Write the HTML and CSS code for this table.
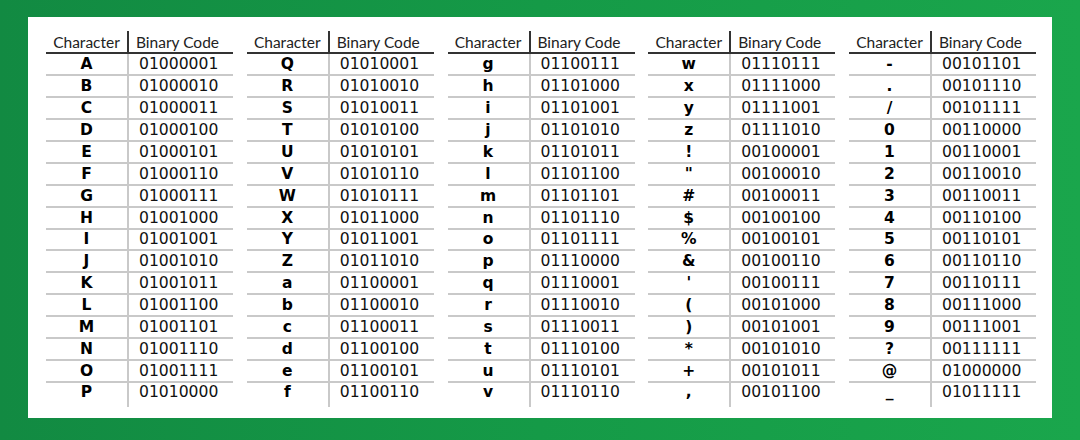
FILE: index.html
```html
<!DOCTYPE html>
<html>
<head>
<meta charset="utf-8">
<link rel="stylesheet" href="styles.css">
</head>
<body>
<div class="panel">
<table class="codes">
<thead><tr><th>Character</th><th>Binary Code</th></tr></thead>
<tbody>
<tr><td>A</td><td>01000001</td></tr>
<tr><td>B</td><td>01000010</td></tr>
<tr><td>C</td><td>01000011</td></tr>
<tr><td>D</td><td>01000100</td></tr>
<tr><td>E</td><td>01000101</td></tr>
<tr><td>F</td><td>01000110</td></tr>
<tr><td>G</td><td>01000111</td></tr>
<tr><td>H</td><td>01001000</td></tr>
<tr><td>I</td><td>01001001</td></tr>
<tr><td>J</td><td>01001010</td></tr>
<tr><td>K</td><td>01001011</td></tr>
<tr><td>L</td><td>01001100</td></tr>
<tr><td>M</td><td>01001101</td></tr>
<tr><td>N</td><td>01001110</td></tr>
<tr><td>O</td><td>01001111</td></tr>
<tr><td>P</td><td>01010000</td></tr>
</tbody>
</table>
<table class="codes">
<thead><tr><th>Character</th><th>Binary Code</th></tr></thead>
<tbody>
<tr><td>Q</td><td>01010001</td></tr>
<tr><td>R</td><td>01010010</td></tr>
<tr><td>S</td><td>01010011</td></tr>
<tr><td>T</td><td>01010100</td></tr>
<tr><td>U</td><td>01010101</td></tr>
<tr><td>V</td><td>01010110</td></tr>
<tr><td>W</td><td>01010111</td></tr>
<tr><td>X</td><td>01011000</td></tr>
<tr><td>Y</td><td>01011001</td></tr>
<tr><td>Z</td><td>01011010</td></tr>
<tr><td>a</td><td>01100001</td></tr>
<tr><td>b</td><td>01100010</td></tr>
<tr><td>c</td><td>01100011</td></tr>
<tr><td>d</td><td>01100100</td></tr>
<tr><td>e</td><td>01100101</td></tr>
<tr><td>f</td><td>01100110</td></tr>
</tbody>
</table>
<table class="codes">
<thead><tr><th>Character</th><th>Binary Code</th></tr></thead>
<tbody>
<tr><td>g</td><td>01100111</td></tr>
<tr><td>h</td><td>01101000</td></tr>
<tr><td>i</td><td>01101001</td></tr>
<tr><td>j</td><td>01101010</td></tr>
<tr><td>k</td><td>01101011</td></tr>
<tr><td>l</td><td>01101100</td></tr>
<tr><td>m</td><td>01101101</td></tr>
<tr><td>n</td><td>01101110</td></tr>
<tr><td>o</td><td>01101111</td></tr>
<tr><td>p</td><td>01110000</td></tr>
<tr><td>q</td><td>01110001</td></tr>
<tr><td>r</td><td>01110010</td></tr>
<tr><td>s</td><td>01110011</td></tr>
<tr><td>t</td><td>01110100</td></tr>
<tr><td>u</td><td>01110101</td></tr>
<tr><td>v</td><td>01110110</td></tr>
</tbody>
</table>
<table class="codes">
<thead><tr><th>Character</th><th>Binary Code</th></tr></thead>
<tbody>
<tr><td>w</td><td>01110111</td></tr>
<tr><td>x</td><td>01111000</td></tr>
<tr><td>y</td><td>01111001</td></tr>
<tr><td>z</td><td>01111010</td></tr>
<tr><td>!</td><td>00100001</td></tr>
<tr><td>"</td><td>00100010</td></tr>
<tr><td>#</td><td>00100011</td></tr>
<tr><td>$</td><td>00100100</td></tr>
<tr><td>%</td><td>00100101</td></tr>
<tr><td>&amp;</td><td>00100110</td></tr>
<tr><td>'</td><td>00100111</td></tr>
<tr><td>(</td><td>00101000</td></tr>
<tr><td>)</td><td>00101001</td></tr>
<tr><td>*</td><td>00101010</td></tr>
<tr><td>+</td><td>00101011</td></tr>
<tr><td>,</td><td>00101100</td></tr>
</tbody>
</table>
<table class="codes">
<thead><tr><th>Character</th><th>Binary Code</th></tr></thead>
<tbody>
<tr><td>-</td><td>00101101</td></tr>
<tr><td>.</td><td>00101110</td></tr>
<tr><td>/</td><td>00101111</td></tr>
<tr><td>0</td><td>00110000</td></tr>
<tr><td>1</td><td>00110001</td></tr>
<tr><td>2</td><td>00110010</td></tr>
<tr><td>3</td><td>00110011</td></tr>
<tr><td>4</td><td>00110100</td></tr>
<tr><td>5</td><td>00110101</td></tr>
<tr><td>6</td><td>00110110</td></tr>
<tr><td>7</td><td>00110111</td></tr>
<tr><td>8</td><td>00111000</td></tr>
<tr><td>9</td><td>00111001</td></tr>
<tr><td>?</td><td>00111111</td></tr>
<tr><td>@</td><td>01000000</td></tr>
<tr><td>_</td><td>01011111</td></tr>
</tbody>
</table>
</div>
</body>
</html>
```

FILE: styles.css
```css
html, body {
  margin: 0;
  padding: 0;
}
body {
  width: 1080px;
  height: 440px;
  background: linear-gradient(90deg, #128a42 0%, #159a47 50%, #1aa64c 100%);
  overflow: hidden;
  padding-top: 17px;
  box-sizing: border-box;
}
.panel {
  margin: 0 28px;
  height: 401px;
  background: #fff;
  box-sizing: border-box;
  padding: 14px 16px 0 18px;
  display: flex;
  gap: 13.75px;
  align-items: flex-start;
}
.codes {
  border-collapse: collapse;
  table-layout: fixed;
  width: 187px;
}
.codes th {
  font-family: "Lato", "Liberation Sans", sans-serif;
  font-weight: 400;
  font-size: 15.5px;
  color: #222;
  height: 20px;
  padding: 1px 0 0 0;
  vertical-align: middle;
  border-bottom: 2px solid #333;
  white-space: nowrap;
}
.codes th:first-child {
  width: 81px;
  border-right: 2px solid #333;
  text-align: center;
}
.codes th:last-child {
  text-align: left;
  padding-left: 7px;
}
.codes td {
  height: 19.95px;
  padding: 0;
  border-bottom: 2px solid #c9c9c9;
  color: #111;
  vertical-align: middle;
}
.codes tbody tr:last-child td {
  border-bottom: none;
  height: 24px;
  vertical-align: top;
}
.codes td:first-child {
  border-right: 2px solid #c9c9c9;
  text-align: center;
  font-family: "DejaVu Sans", "Verdana", sans-serif;
  font-weight: 700;
  font-size: 15.5px;
  color: #000;
}
.codes td:last-child {
  text-align: left;
  padding-left: 10px;
  font-family: "DejaVu Sans", "Verdana", sans-serif;
  font-size: 15.6px;
}
```
